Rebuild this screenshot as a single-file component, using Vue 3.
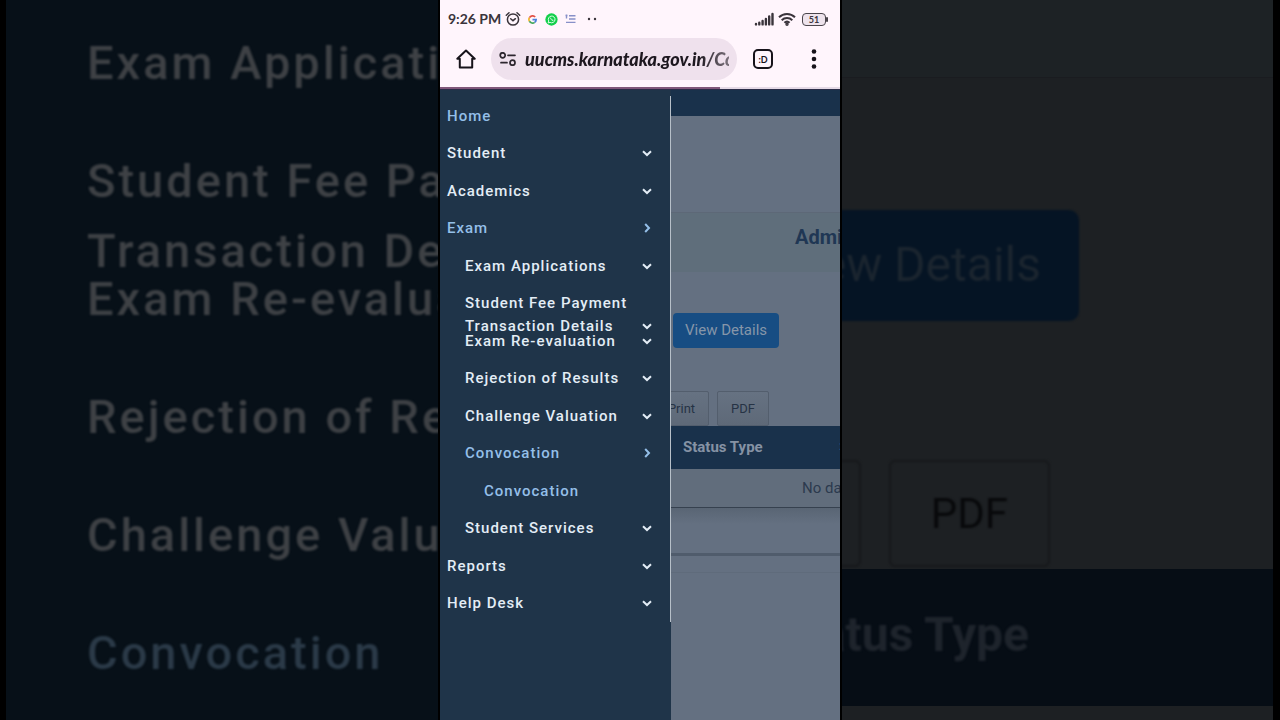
<script setup>
import { ref } from 'vue'

const address = ref('uucms.karnataka.gov.in/Convocation')

const menu = [
  { label: 'Home', level: 0, active: true },
  { label: 'Student', level: 0, arrow: 'down' },
  { label: 'Academics', level: 0, arrow: 'down' },
  { label: 'Exam', level: 0, arrow: 'right', active: true },
  { label: 'Exam Applications', level: 1, arrow: 'down' },
  { label: 'Student Fee Payment', level: 1 },
  { label: 'Transaction Details', level: 1, arrow: 'down', tight: true },
  { label: 'Exam Re-evaluation', level: 1, arrow: 'down' },
  { label: 'Rejection of Results', level: 1, arrow: 'down' },
  { label: 'Challenge Valuation', level: 1, arrow: 'down' },
  { label: 'Convocation', level: 1, arrow: 'right', active: true },
  { label: 'Convocation', level: 2, active: true },
  { label: 'Student Services', level: 1, arrow: 'down' },
  { label: 'Reports', level: 0, arrow: 'down' },
  { label: 'Help Desk', level: 0, arrow: 'down' }
]

const enlarged = menu.slice(4, 11)
</script>

<template>
  <main class="stage">
    <div class="backdrop backdrop-left" aria-hidden="true">
      <div
        v-for="item in enlarged"
        :key="item.label"
        class="big-row"
        :class="{ active: item.active, tight: item.tight }"
      >{{ item.label }}</div>
    </div>

    <section class="phone">
      <header class="status">
        <span class="clock">9:26 PM</span>
        <svg class="alarm" viewBox="0 0 16 16" width="16" height="16" fill="none" stroke="#3a343b" stroke-width="1.5" stroke-linecap="round">
          <circle cx="8" cy="8.5" r="5.6" /><path d="M1.3 4.2 4 1.8M14.7 4.2 12 1.8M5.7 7.7 8 9.7l2.4-2" />
        </svg>
        <svg class="google" viewBox="0 0 10 10" width="9" height="9" fill="none" stroke-width="1.9">
          <path d="M8 2.2A4 4 0 0 0 1.6 3" stroke="#e25045" /><path d="M1.6 3a4 4 0 0 0 0 4" stroke="#efb52c" />
          <path d="M1.6 7a4 4 0 0 0 5.8 1.2" stroke="#43a65a" /><path d="M7.4 8.2A4 4 0 0 0 9 5.2H5" stroke="#4a80dc" />
        </svg>
        <svg class="whatsapp" viewBox="0 0 14 14" width="13" height="13">
          <circle cx="7" cy="7" r="6.6" fill="#12cf4b" />
          <path d="M3.4 10.7 4 8.6a3.6 3.6 0 1 1 1.5 1.5z" fill="none" stroke="#e9fff0" stroke-width="1" />
          <path d="M5.6 5.2c0 1.8 1.5 3.2 3.1 3.3l.4-.9-1-.6-.5.4-1-.9.3-.5-.5-.9z" fill="#e9fff0" />
        </svg>
        <svg class="list" viewBox="0 0 11 10" width="11" height="10" stroke="#8790c8" stroke-width="1.4">
          <path d="M4 1.8h6.5M4 5h6.5M1 8.4h9.5M.5 1.5h2M1.5.5v4" />
        </svg>
        <svg class="more" viewBox="0 0 10 4" width="10" height="4" fill="#3a343b"><circle cx="2" cy="2" r="1.2" /><circle cx="8" cy="2" r="1.2" /></svg>
        <svg class="signal" viewBox="0 0 20 14" width="20" height="14" stroke="#3a343b" stroke-width="2.4" stroke-linecap="round">
          <path d="M2 12.4v-.4M5.3 12.4v-1.6M8.6 12.4V9M11.9 12.4V6.9M15.2 12.4V4.4M18.5 12.4V2" />
        </svg>
        <svg class="wifi" viewBox="0 0 18 14" width="18" height="14" fill="none" stroke="#3a343b" stroke-width="2">
          <path d="M1 5.3a11.5 11.5 0 0 1 16 0M3.7 8.2a7.6 7.6 0 0 1 10.6 0M6.4 10.8a3.8 3.8 0 0 1 5.2 0" /><circle cx="9" cy="12.3" r=".7" />
        </svg>
        <span class="battery">51</span>
      </header>

      <div class="toolbar">
        <button class="icon-button home" aria-label="Home page">
          <svg viewBox="0 0 20 20" width="20" height="20" fill="none" stroke="#17131a" stroke-width="2" stroke-linejoin="round"><path d="M1.3 9.8 10 1.5l8.7 8.3h-2.5v8.7H3.8V9.8z" /></svg>
        </button>
        <div class="address">
          <svg viewBox="0 0 18 14" width="18" height="14" fill="none" stroke="#2c262e" stroke-width="1.7" stroke-linecap="round"><circle cx="3.7" cy="3.3" r="2.5" /><path d="M9 3.3h7M2 10.7h6" /><circle cx="13.5" cy="10.7" r="2.5" /></svg>
          <input v-model="address" aria-label="Address" type="text" />
        </div>
        <button class="icon-button tabs" aria-label="Open tabs">:D</button>
        <button class="icon-button" aria-label="Browser menu">
          <svg viewBox="0 0 6 20" width="6" height="20" fill="#17131a"><circle cx="3" cy="2.5" r="2.3" /><circle cx="3" cy="10" r="2.3" /><circle cx="3" cy="17.5" r="2.3" /></svg>
        </button>
      </div>
      <div class="progress"><div class="loaded"></div></div>

      <div class="site">
        <nav class="drawer">
          <ul>
            <li v-for="(item, i) in menu" :key="i" :class="['level-' + item.level, { active: item.active, tight: item.tight }]">
              <a href="#">
                <span>{{ item.label }}</span>
                <svg v-if="item.arrow" viewBox="0 0 12 12" width="12" height="12" fill="none" stroke="currentColor" stroke-width="2">
                  <path :d="item.arrow === 'down' ? 'M2 4.2 6 8l4-3.8' : 'M4.2 2 8 6l-3.8 4'" />
                </svg>
              </a>
            </li>
          </ul>
        </nav>

        <div class="page">
          <div class="topbar"></div>
          <div class="band"><h1>Admission</h1></div>
          <button class="details">View Details</button>
          <div class="exports">
            <button>Print</button>
            <button>PDF</button>
          </div>
          <table>
            <thead>
              <tr><th><div class="head"><span>Status Type</span><span class="sort">⇕</span></div></th></tr>
            </thead>
            <tbody>
              <tr><td>No data available in table</td></tr>
            </tbody>
          </table>
          <div class="rest"></div>
          <hr />
          <div class="foot"></div>
        </div>
      </div>
    </section>

    <div class="backdrop backdrop-right" aria-hidden="true">
      <div class="big-band"></div>
      <div class="big-details">View Details</div>
      <div class="big-exports"><div>Print</div><div>PDF</div></div>
      <div class="big-head"><span>Status Type</span><span class="big-sort">⇕</span></div>
    </div>
  </main>
</template>

<style>
body { margin: 0; background: #000; }
</style>

<style scoped>
* { box-sizing: border-box; }

.stage {
  display: grid;
  grid-template-columns: 11fr 10fr 11fr;
  height: 100vh;
  min-height: 720px;
  overflow: hidden;
  background: #000;
  font-family: Roboto, "Liberation Sans", sans-serif;
}

button {
  margin: 0;
  padding: 0;
  border: 0;
  background: none;
  font-family: inherit;
}

/* Enlarged, dimmed copy behind the phone */
.backdrop {
  min-width: 0;
  overflow: hidden;
  font-size: 48px;
  white-space: nowrap;
}
.backdrop-left {
  margin: 0 2px 0 6px;
  padding: 4px 0 0 81px;
  background: #071018;
  color: #3e4145;
  font-size: 47px;
  font-weight: 500;
  letter-spacing: 3px;
}
.big-row {
  height: 118px;
  line-height: 118px;
  filter: blur(1px);
}
.big-row.tight {
  height: 22px;
  margin-bottom: -22px;
  line-height: 22px;
}
.big-row.active { color: #2b3a48; }

.backdrop-right {
  display: flex;
  flex-direction: column;
  margin: 0 7px 0 2px;
  background: #1d2023;
  color: #1b252f;
}
.big-band {
  height: 78px;
  margin-bottom: 132px;
  border-bottom: 1px solid #1a1c20;
  background: #1d2225;
}
.big-details {
  align-self: flex-end;
  height: 111px;
  margin-right: 194px;
  padding: 0 38px;
  border-radius: 10px;
  background: #051424;
  line-height: 110px;
  filter: blur(1px);
}
.big-exports {
  display: flex;
  justify-content: flex-end;
  gap: 28px;
  margin: 139px 223px 2px 0;
  color: #08090b;
  font-size: 42px;
  line-height: 103px;
  filter: blur(1px);
}
.big-exports div {
  padding: 0 40px;
  border: 2px solid #16181b;
  border-radius: 6px;
}
.big-head {
  display: flex;
  justify-content: flex-end;
  height: 137px;
  background: #060d15;
  color: #1e242c;
  font-weight: 700;
  line-height: 132px;
}
.big-head span { filter: blur(1px); }
.big-sort {
  width: 6px;
  margin-left: 244px;
  overflow: hidden;
  font-size: 32px;
}

/* Phone */
.phone {
  display: flex;
  flex-direction: column;
  min-width: 0;
  background: #fff5fc;
}
.status {
  display: flex;
  align-items: center;
  height: 38px;
  padding: 0 14px 0 8px;
  color: #3a343b;
}
.status svg { flex: none; }
.clock {
  width: 57px;
  font: 700 14px/18px Lato, sans-serif;
  white-space: nowrap;
}
.google { margin-left: 7px; }
.whatsapp { margin-left: 8px; }
.list { margin-left: 7px; }
.more { margin-left: 11px; }
.signal { margin-left: auto; }
.wifi { margin: 0 6px 0 4px; }
.battery {
  position: relative;
  width: 24px;
  height: 13px;
  border: 1px solid #4a444b;
  border-radius: 4px;
  background: #eee3ec;
  font: 700 9px/11px Lato, sans-serif;
  text-align: center;
}
.battery::after {
  content: "";
  position: absolute;
  top: 3px;
  right: -3px;
  width: 2px;
  height: 5px;
  border-radius: 1px;
  background: #4a444b;
}

.toolbar {
  display: flex;
  align-items: center;
  height: 49px;
  padding: 0 14px 7px 15px;
}
.icon-button {
  display: flex;
  align-items: center;
  justify-content: center;
  flex: none;
  width: 24px;
  height: 24px;
}
.icon-button.home { width: 21px; }
.address {
  display: flex;
  align-items: center;
  gap: 8px;
  flex: 1;
  min-width: 0;
  height: 42px;
  margin: 0 16px 0 15px;
  padding: 0 8px;
  border-radius: 21px;
  background: #efe1ed;
}
.address svg { flex: none; }
.address input {
  flex: 1;
  min-width: 0;
  padding: 0;
  border: 0;
  outline: 0;
  background: none;
  color: #1d171f;
  font: italic 900 18px Lato, sans-serif;
  mask-image: linear-gradient(to right, #000 85%, rgb(0 0 0 / 55%));
}
.icon-button.tabs {
  width: 20px;
  height: 20px;
  margin-right: 29px;
  border: 2px solid #17131a;
  border-radius: 5px;
  color: #17131a;
  font: 700 9px Lato, sans-serif;
}
.progress {
  flex: none;
  height: 3px;
  border-bottom: 1px solid #2b2c48;
  background: #e5d9e6;
}
.loaded {
  width: 70%;
  height: 2px;
  background: #80577a;
}

.site {
  display: grid;
  grid-template-columns: 231fr 169fr;
  flex: 1;
  min-height: 0;
}
.drawer {
  min-width: 0;
  padding-top: 6px;
  background: #1f3449;
}
.drawer ul {
  display: flex;
  flex-direction: column;
  min-height: 526px;
  margin: 0;
  padding: 1px 0 0;
  border-right: 1px solid #b7c0c9;
  list-style: none;
}
.drawer li {
  display: flex;
  align-items: center;
  flex: 1 1 0;
  padding-left: 7px;
}
.drawer .level-1 { padding-left: 25px; }
.drawer .level-2 { padding-left: 44px; }
.drawer .tight {
  flex: 0 0 8px;
  height: 8px;
  margin-bottom: -8px;
}
.drawer a {
  display: flex;
  align-items: center;
  justify-content: space-between;
  flex: 1;
  padding-right: 17px;
  color: #e3edf6;
  font-size: 15px;
  font-weight: 500;
  line-height: 16px;
  letter-spacing: 1px;
  text-decoration: none;
  white-space: nowrap;
}
.drawer .active a { color: #94bfe8; }

.page {
  display: flex;
  flex-direction: column;
  min-width: 0;
  overflow: hidden;
  background: #647081;
  color: #2c3a4e;
}
.topbar {
  height: 26px;
  background: #19314b;
}
.band {
  height: 60px;
  margin-top: 96px;
  padding-left: 124px;
  border-top: 1px solid #5d6877;
  background: #5f6e7b;
}
h1 {
  margin: 0;
  color: #203754;
  font-size: 20px;
  font-weight: 700;
  line-height: 48px;
}
.details {
  align-self: flex-start;
  height: 35px;
  margin: 41px 0 0 2px;
  padding: 0 12px 2px;
  border-radius: 4px;
  background: #174d83;
  color: #8696a9;
  font-size: 15px;
  white-space: nowrap;
}
.exports {
  display: flex;
  justify-content: flex-end;
  gap: 8px;
  margin: 43px 71px 0 0;
}
.exports button {
  height: 35px;
  padding: 0 13px;
  border: 1px solid #535e6d;
  border-radius: 2px;
  background: linear-gradient(#667282, #5e6978);
  color: #263345;
  font-size: 13px;
}
table {
  width: 100%;
  border-collapse: collapse;
  border-bottom: 1px solid #36414f;
  font-size: 15px;
  white-space: nowrap;
  table-layout: fixed;
}
th {
  height: 43px;
  padding: 0 0 2px 12px;
  background: #19314b;
  color: #8592a4;
  text-align: left;
}
.head {
  display: flex;
  justify-content: space-between;
  align-items: center;
}
.sort {
  width: 3px;
  overflow: hidden;
}
td {
  height: 38px;
  padding: 0 0 0 131px;
  background: #616d7c;
}
.rest {
  height: 45px;
  background: linear-gradient(#596574, #647081 16px);
}
hr {
  width: 100%;
  height: 3px;
  margin: 0;
  border: 0;
  background: #505c6c;
}
.foot {
  height: 17px;
  border-bottom: 1px solid #5f6b7b;
}
</style>
